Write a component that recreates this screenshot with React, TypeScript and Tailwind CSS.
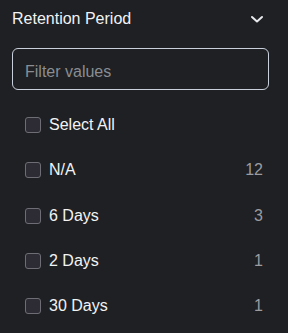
import React from "react";

const items = [
    { label: "N/A", count: 12 },
    { label: "6 Days", count: 3 },
    { label: "2 Days", count: 1 },
    { label: "30 Days", count: 1 },
];

const Box = () => (
    <span className="w-4 h-4 shrink-0 rounded-[3px] border border-[#6e6d76] bg-[#2d2c35]" />
);

const App = () => {
    return (
        <div className="w-[288px] h-[333px] bg-[#1f2023] text-[#f1f3f4] font-['Liberation_Sans',Arial,sans-serif] overflow-hidden">
            <div className="h-9 flex items-center justify-between pl-3 pr-[24px] pt-[2px]">
                <span className="text-base">Retention Period</span>
                <svg width="14" height="14" viewBox="0 0 14 14" fill="none">
                    <path d="M2 5l5 4.5L12 5" stroke="#e8eaed" strokeWidth="2" strokeLinecap="round" strokeLinejoin="round" />
                </svg>
            </div>
            <div className="px-3 pt-3">
                <input
                    placeholder="Filter values"
                    className="w-[257px] h-[42px] rounded-[6px] border border-[#c9d0dc] bg-transparent px-3 pt-[5px] text-base text-[#f1f3f4] placeholder:text-[#8a8d91] outline-none"
                />
            </div>
            <div className="pt-[12.5px] pl-[25px] pr-[25px]">
                <div className="h-[45.25px] flex items-center gap-2">
                    <Box />
                    <span className="text-base">Select All</span>
                </div>
                {items.map((it) => (
                    <div key={it.label} className="h-[45.25px] flex items-center gap-2">
                        <Box />
                        <span className="text-base flex-1">{it.label}</span>
                        <span className="text-base text-[#9a9ca0]">{it.count}</span>
                    </div>
                ))}
            </div>
        </div>
    );
};

export default App;
